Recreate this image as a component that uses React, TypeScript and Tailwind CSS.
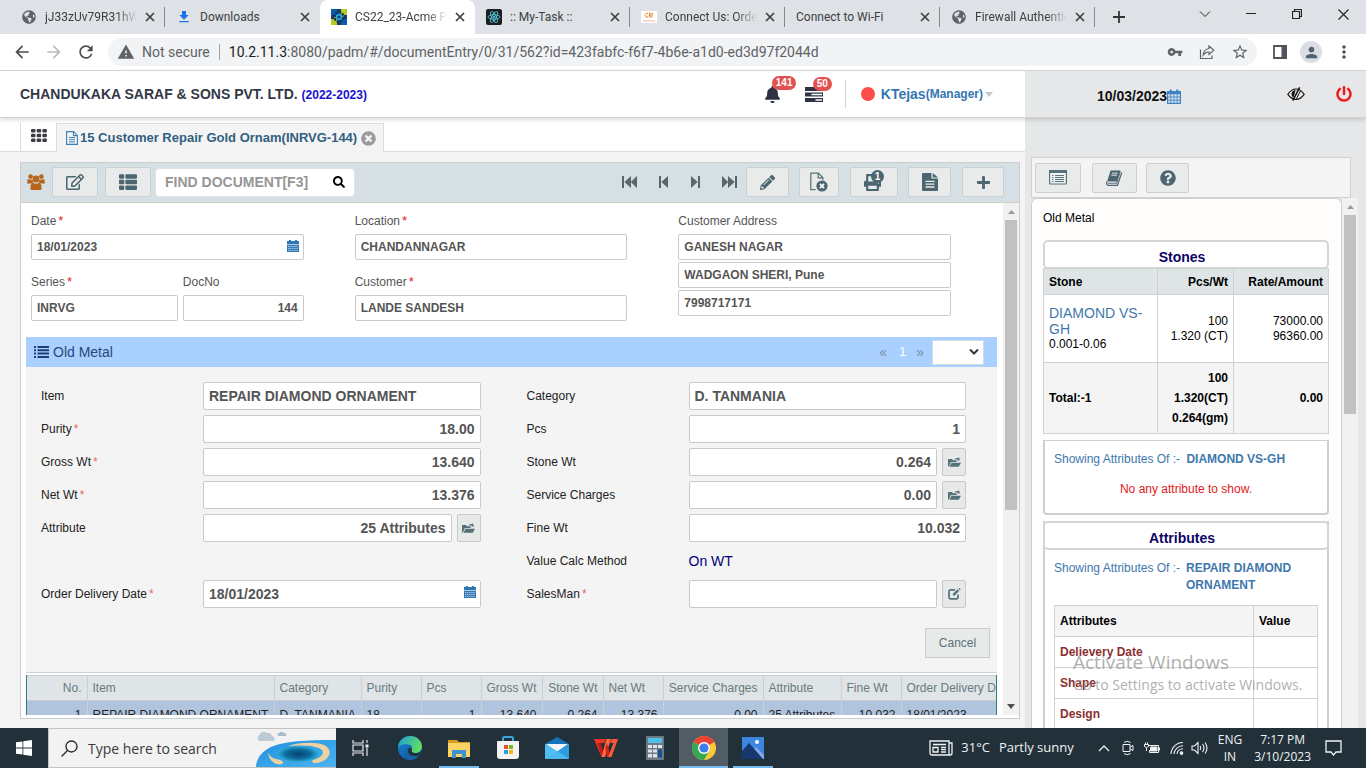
import React from "react";
import {
  FaBell, FaFileAlt, FaGlobeAmericas, FaPlus, FaPowerOff,
  FaPrint, FaQuestionCircle, FaRegEdit, FaSearch,
  FaThList, FaTimesCircle, FaPencilAlt,
} from "react-icons/fa";
import {
  MdArrowBack, MdArrowForward, MdFileDownload, MdMoreVert, MdPerson, MdRefresh, MdStarBorder,
  MdVpnKey, MdWarning,
} from "react-icons/md";

const SANS = "font-['Liberation_Sans',Arial,sans-serif]";
const UI = "font-['Open_Sans','Noto_Sans',sans-serif]";
const BROWSER = "font-[Roboto,'Noto_Sans',sans-serif]";

/* ---------- small drawings ---------- */

const CloseX = ({ size = 10 }: { size?: number }) => (
  <svg width={size} height={size} viewBox="0 0 10 10" stroke="currentColor" strokeWidth="1.7" fill="none" aria-hidden="true">
    <path d="M1 1l8 8M9 1l-8 8" />
  </svg>
);

const AcmeLogo = () => (
  <svg width="16" height="16" viewBox="0 0 16 16" aria-hidden="true">
    <path d="M0 0h8v8H0zM8 8h8v8H8z" fill="#0b5cab" />
    <path d="M8 0h8v8H8zM0 8h8v8H0z" fill="#b5cc1f" />
    <path d="M0 6h3v4H0zM13 6h3v4h-3zM6 0h4v3H6zM6 13h4v3H6z" fill="#153a6b" />
    <circle cx="8" cy="8" r="4.4" fill="none" stroke="#12305c" strokeWidth="2.6" strokeDasharray="2.4 .9" />
    <circle cx="8" cy="8" r="3.2" fill="#2aa7e0" />
    <circle cx="8" cy="8" r="1.5" fill="#0b3a6e" />
  </svg>
);

const ReactLogo = () => (
  <svg width="16" height="16" viewBox="0 0 16 16" fill="none" stroke="#5cc3d9" strokeWidth=".9" aria-hidden="true">
    <rect width="16" height="16" rx="2" fill="#1b1f24" stroke="none" />
    <ellipse cx="8" cy="8" rx="6" ry="2.3" />
    <ellipse cx="8" cy="8" rx="6" ry="2.3" transform="rotate(60 8 8)" />
    <ellipse cx="8" cy="8" rx="6" ry="2.3" transform="rotate(120 8 8)" />
    <circle cx="8" cy="8" r="1" fill="#5cc3d9" />
  </svg>
);

const ConnectLogo = () => (
  <svg width="16" height="12" viewBox="0 0 16 12" fill="none" aria-hidden="true">
    <rect width="16" height="12" fill="#fff" />
    <path d="M7 2.5a2 2 0 1 0 0 3.6V4.4M8.5 1.5V5a1.4 1.4 0 0 0 2.8 0V1.5M9.8 2v3" stroke="#ee8a3c" strokeWidth="1" />
    <path d="M2 9.8h12" stroke="#f3a9a0" strokeWidth="1.2" strokeDasharray="1.5 .6" />
  </svg>
);

const GlyphCalendar = () => (
  <svg width="12" height="12" viewBox="0 0 12 12" fill="#2f76b5" aria-hidden="true">
    <path d="M2 0h2v1h4V0h2v1h2v3H0V1h2z" />
    <path d="M0 4.600h12V12H0z" />
    <path d="M1 6.400h10M1 8.400h10M1 10.400h10" stroke="#dcebf7" strokeWidth=".8" strokeDasharray="1.4 .7" />
  </svg>
);

const GridCalendar = () => (
  <svg width="14" height="15" viewBox="0 0 14 15" fill="none" stroke="#3a83c4" aria-hidden="true">
    <path d="M.6 2.600h12.800v11.800H.6z" strokeWidth="1.200" />
    <path d="M.6 2.600h12.800v2.200H.6z" fill="#3a83c4" />
    <path d="M3.800 .4v3M10.200 .4v3" strokeWidth="2" />
    <path d="M3.800 5v9M7 5v9M10.200 5v9M1 8h12M1 11.200h12" strokeWidth=".9" />
  </svg>
);

const TasksIcon = () => (
  <svg width="18" height="15" viewBox="0 0 18 15" aria-hidden="true">
    <path d="M0 0h18v4H0zM0 5.500h18v4H0zM0 11h18v4H0z" fill="#2f3242" />
    <path d="M6.500 6.700H17v1.600H6.500zM10.500 12.200H17v1.600h-6.500zM12 1.200h5v1.600h-5z" fill="#fff" />
  </svg>
);

const AppsGrid = () => (
  <svg width="16" height="13" viewBox="0 0 16 13" fill="#3c3c46" aria-hidden="true">
    <rect width="4.500" height="3.600" rx="1" /><rect x="5.700" width="4.500" height="3.600" rx="1" /><rect x="11.400" width="4.500" height="3.600" rx="1" />
    <rect y="4.700" width="4.500" height="3.600" rx="1" /><rect x="5.700" y="4.700" width="4.500" height="3.600" rx="1" /><rect x="11.400" y="4.700" width="4.500" height="3.600" rx="1" />
    <rect y="9.400" width="4.500" height="3.600" rx="1" /><rect x="5.700" y="9.400" width="4.500" height="3.600" rx="1" /><rect x="11.400" y="9.400" width="4.500" height="3.600" rx="1" />
  </svg>
);

const DocIcon = () => (
  <svg width="12" height="14" viewBox="0 0 12 14" fill="none" stroke="#3a83b8" aria-hidden="true">
    <path d="M.6 .6h7l3.800 3.800v9H.6zM7.400 .8v3.800h3.800" strokeWidth="1.100" />
    <path d="M3 6.500h6M3 8.700h6M3 10.900h6" strokeWidth="1" />
  </svg>
);

const UsersIcon = () => (
  <svg width="18" height="16" viewBox="0 0 18 16" fill="#b5651d" aria-hidden="true">
    <circle cx="3.600" cy="2.600" r="2.300" /><circle cx="14.400" cy="2.600" r="2.300" />
    <circle cx="9" cy="5" r="3.400" />
    <path d="M.2 9.200V7.400q0-2 1.200-2.400 2 1 4 .4.400 1.800 1.400 2.800-1.800.2-2.600 1.400H1.400Q.2 9.600.2 9.200zM17.800 9.200V7.400q0-2-1.200-2.400-2 1-4 .4-.4 1.800-1.400 2.800 1.800.2 2.600 1.400h2.800q1.200 0 1.200-.4z" />
    <path d="M3.400 14.400q0-5.600 2.600-5.600Q9 10.800 12 8.800q2.600 0 2.600 5.600 0 1.600-1.600 1.600H5q-1.600 0-1.600-1.600z" />
  </svg>
);

const ListLines = () => (
  <svg width="15" height="12" viewBox="0 0 15 12" fill="#1f3b78" aria-hidden="true">
    <path d="M0 0h2v2H0zM3.500 0H15v2H3.500zM0 3.300h2v2H0zM3.500 3.300H15v2H3.500zM0 6.600h2v2H0zM3.500 6.600H15v2H3.500zM0 9.900h2v2H0zM3.500 9.900H15v2H3.500z" />
  </svg>
);

const FolderOpen = () => (
  <svg width="13" height="11" viewBox="0 0 13 11" fill="#55717a" aria-hidden="true">
    <path d="M0 2h4l1 1.200h3.600V5H2.800L1 9.400H0z" />
    <path d="M3.400 5.800H13l-2.200 4H1.600z" />
    <path d="M6.600 2.400c1-1.500 2.400-1.800 3.600-1.100L11 0l.9 3.400-3.300-.2.900-1c-.7-.3-1.400-.2-2 .5z" />
  </svg>
);

const EditSquare = () => (
  <svg width="13" height="12" viewBox="0 0 13 12" fill="none" stroke="#55717a" aria-hidden="true">
    <path d="M7 1.800H2.600A1.600 1.600 0 0 0 1 3.400v5.800a1.600 1.600 0 0 0 1.600 1.600h5.800A1.600 1.600 0 0 0 10 9.200V6.400" strokeWidth="1.700" />
    <path d="M5.300 7.200l5-5" strokeWidth="2.400" />
    <path d="M11.200 1.500l.8-.8" strokeWidth="1.800" />
  </svg>
);

const SkipFirst = () => (
  <svg width="15" height="12" viewBox="0 0 15 12" fill="#5c6669" aria-hidden="true">
    <path d="M0 0h2v12H0zM9 0v12L2.400 6zM15 0v12L8.800 6z" />
  </svg>
);
const SkipPrev = () => (
  <svg width="9" height="12" viewBox="0 0 9 12" fill="#5c6669" aria-hidden="true">
    <path d="M0 0h2v12H0zM9 0v12L2.400 6z" />
  </svg>
);

const FileRemove = () => (
  <svg width="20" height="20" viewBox="0 0 20 20" fill="none" aria-hidden="true">
    <path d="M6.500 17.600H1.800V1.200h7.600l4.400 4.400v2.600M9.200 1.400v4.400h4.400" stroke="#55717a" strokeWidth="1.200" />
    <circle cx="13" cy="14" r="5.600" fill="#4b6670" />
    <path d="M10.900 11.900l4.200 4.200M15.100 11.900l-4.200 4.200" stroke="#fff" strokeWidth="1.600" />
  </svg>
);

const FileSolid = () => (
  <svg width="16" height="18" viewBox="0 0 16 18" fill="#4b6670" aria-hidden="true">
    <path d="M0 1q0-1 1-1h8.500v5.500H16V17q0 1-1 1H1q-1 0-1-1zM10.800 0L16 4.400h-5.200z" />
    <path d="M3.500 8.400h9M3.500 11.200h9M3.500 14h9" stroke="#e9eaea" strokeWidth="1.300" />
  </svg>
);

const EyeSlash = () => (
  <svg width="18" height="14" viewBox="0 0 18 14" fill="none" stroke="#111" aria-hidden="true">
    <path d="M.8 7.400C3.400 3.400 6.200 2 9 2s5.600 1.400 8.200 5.400C14.600 11 12 12.400 9 12.400S3.400 11 .8 7.400z" strokeWidth="1.100" />
    <path d="M8.600 3c-3 .2-4 2.200-4 4.200 0 1.600.8 2.800 1.800 3.600z" fill="#111" stroke="none" />
    <path d="M12.600 .4L5.800 13.600" strokeWidth="1.500" />
    <path d="M13.800 3.200L9.400 11.800" strokeWidth="1" />
  </svg>
);

const ShareIcon = () => (
  <svg width="16" height="16" viewBox="0 0 16 16" fill="none" stroke="#5f6368" strokeWidth="1.200" aria-hidden="true">
    <path d="M1.500 5.500v9h11.500v-3" />
    <path d="M10 2l4.800 4.200L10 10.400V8C7.400 8 5.600 9 4.200 11c.3-3.400 2.200-6 5.800-6.500z" />
  </svg>
);

const ListAlt = () => (
  <svg width="18" height="15" viewBox="0 0 18 15" aria-hidden="true">
    <rect x=".6" y=".6" width="16.800" height="13.400" rx="1" fill="#f2f4f4" stroke="#55717a" strokeWidth="1.200" />
    <path d="M0 0h18v3H0z" fill="#55717a" />
    <path d="M3 5.500h1.500M6 5.500h9M3 7.500h1.500M6 7.500h9M3 9.500h1.500M6 9.500h9M3 11.500h1.500M6 11.500h9" stroke="#55717a" strokeWidth="1" />
  </svg>
);

const BookIcon = () => (
  <svg width="17" height="16" viewBox="0 0 17 16" aria-hidden="true">
    <path d="M4.600 .4h9.800L11 11.400H1.200z" fill="#4b6670" />
    <path d="M1.200 11.400c-1 1.400-.6 3.600 1 3.900h9.200L15.800 2.600" fill="none" stroke="#4b6670" strokeWidth="1.200" />
    <path d="M1.800 13.300h8.800L14.400 1.500" fill="none" stroke="#4b6670" strokeWidth=".9" />
    <path d="M6 3.200h5.600M5.400 5.200H11" stroke="#dfe6e8" strokeWidth="1" />
  </svg>
);

const Beach = () => (
  <svg width="80" height="38" viewBox="0 0 80 38" aria-hidden="true">
    <defs>
      <linearGradient id="sea" x1="0" y1="0" x2="1" y2="1">
        <stop offset="0" stopColor="#1f8fdd" />
        <stop offset="1" stopColor="#4db4f3" />
      </linearGradient>
      <radialGradient id="hole">
        <stop offset="0" stopColor="#07456e" />
        <stop offset=".6" stopColor="#0d6c9f" />
        <stop offset="1" stopColor="#2fb0d8" />
      </radialGradient>
    </defs>
    <path d="M3 12a4 4 0 0 1 0-6 5 5 0 0 1 8-2 4 4 0 0 1 5 3 3 3 0 0 1 2 5z" fill="#bccbd8" />
    <path d="M22 7a2 2 0 0 1 1-3 3 3 0 0 1 5 0 2 2 0 0 1 2 3z" fill="#a9bdcd" />
    <path d="M0 38c0-8 6-16 15-20C28 12 50 11 80 11v27z" fill="url(#sea)" />
    <path d="M12 22c0 4 4 7 8 8 6 1 9 3 6 5-7 2-14-4-14-13z" fill="#ecd2a2" />
    <path d="M32 17c12-4 28-4 36-1 10 5 6 15-6 18-7 1-8-3-2-4 8-3 9-8 3-11-8-3-20-3-31-2z" fill="#ecd2a2" />
    <ellipse cx="42" cy="25" rx="21" ry="8" fill="url(#hole)" />
  </svg>
);

/* ---------- browser frame ---------- */

type Tab = { title: string; icon?: React.ReactNode; active?: boolean; line?: boolean; fade?: boolean };

const globe = <FaGlobeAmericas size={14} className="text-[#5f6368]" />;

const tabs: Tab[] = [
  { title: "jJ33zUv79R31hWc", icon: globe, line: true, fade: true },
  { title: "Downloads", icon: <MdFileDownload size={18} className="text-[#1a73e8]" /> },
  { title: "CS22_23-Acme Pad", icon: <AcmeLogo />, active: true, fade: true },
  { title: ":: My-Task ::", icon: <ReactLogo />, line: true },
  { title: "Connect Us: Order", icon: <ConnectLogo />, line: true, fade: true },
  { title: "Connect to Wi-Fi", line: true },
  { title: "Firewall Authentica", icon: globe, line: true, fade: true },
];

function TabStrip() {
  return (
    <div className="flex h-[34px] shrink-0 items-stretch bg-[#dee1e6] pl-[10px] text-[12px] text-[#3c4043]">
      {tabs.map((t) => (
        <div
          key={t.title}
          className={`flex w-[155px] items-center pl-[11px] ${t.active ? "rounded-t-lg bg-white" : ""}`}
        >
          {t.icon && <span className="mr-2 flex w-4 shrink-0 justify-center">{t.icon}</span>}
          <span
            className={`min-w-0 flex-1 overflow-hidden whitespace-nowrap ${t.fade ? "[mask-image:linear-gradient(to_right,black_78%,transparent)]" : ""}`}
          >
            {t.title}
          </span>
          <button type="button" aria-label={`Close ${t.title}`} className="ml-2"><CloseX /></button>
          <span className={`ml-[9px] h-5 w-px ${t.line ? "bg-[#85898e]" : "bg-transparent"}`} />
        </div>
      ))}
      <button type="button" aria-label="New tab" className="ml-[18px] flex items-center">
        <svg width="12" height="12" viewBox="0 0 12 12" stroke="#333" strokeWidth="1.800" aria-hidden="true"><path d="M6 0v12M0 6h12" /></svg>
      </button>
      <div className="ml-auto flex h-7 items-center text-[#222]">
        <button type="button" aria-label="Search tabs" className="flex w-[46px] justify-center">
          <svg width="12" height="7" viewBox="0 0 12 7" fill="none" stroke="currentColor" aria-hidden="true"><path d="M1 .5l5 5 5-5" /></svg>
        </button>
        <button type="button" aria-label="Minimize" className="flex w-[46px] justify-center">
          <svg width="10" height="2" viewBox="0 0 10 2" fill="currentColor" aria-hidden="true"><path d="M0 0h10v1H0z" /></svg>
        </button>
        <button type="button" aria-label="Restore" className="flex w-[46px] justify-center">
          <svg width="10" height="10" viewBox="0 0 10 10" fill="none" stroke="currentColor" strokeWidth="1.200" aria-hidden="true"><path d="M.5 2.500h7v7h-7zM2.500 2.500v-2h7v7h-2" /></svg>
        </button>
        <button type="button" aria-label="Close window" className="flex w-[46px] justify-center">
          <svg width="11" height="11" viewBox="0 0 11 11" stroke="currentColor" strokeWidth="1.100" aria-hidden="true"><path d="M.5 .5l10 10M10.500 .5l-10 10" /></svg>
        </button>
      </div>
    </div>
  );
}

function AddressBar() {
  return (
    <div className="flex h-[37px] shrink-0 items-center border-b border-[#d5d7da] bg-white pr-3 pl-3 text-[#5f6368]">
      <button type="button" aria-label="Back"><MdArrowBack size={20} className="text-[#4a4d51]" /></button>
      <button type="button" aria-label="Forward" className="ml-3"><MdArrowForward size={20} className="text-[#b9bbbe]" /></button>
      <button type="button" aria-label="Reload" className="ml-3"><MdRefresh size={20} className="text-[#4a4d51]" /></button>
      <div className="ml-3 flex h-7 min-w-0 flex-1 items-center rounded-full bg-[#f1f3f4] pr-2 pl-[9px]">
        <MdWarning size={18} className="shrink-0" />
        <span className="ml-[7px] shrink-0 text-[14px]">Not secure</span>
        <span className="mx-[9px] h-4 w-px shrink-0 bg-[#9aa0a6]" />
        <span className="min-w-0 flex-1 overflow-hidden text-[14px] whitespace-nowrap">
          <span className="text-[#202124]">10.2.11.3</span>:8080/padm/#/documentEntry/0/31/562?id=423fabfc-f6f7-4b6e-a1d0-ed3d97f2044d
        </span>
        <button type="button" aria-label="Passwords"><MdVpnKey size={16} /></button>
        <button type="button" aria-label="Share" className="ml-4"><ShareIcon /></button>
        <button type="button" aria-label="Bookmark" className="ml-4"><MdStarBorder size={18} /></button>
      </div>
      <button type="button" aria-label="Side panel" className="ml-4">
        <svg width="14" height="14" viewBox="0 0 14 14" aria-hidden="true">
          <path d="M1 1h12v12H1z" fill="none" stroke="#50545a" strokeWidth="1.800" />
          <path d="M8.500 0H14v14H8.500z" fill="#50545a" />
        </svg>
      </button>
      <button type="button" aria-label="Profile" className="ml-[13px] flex size-[22px] items-center justify-center rounded-full bg-[#dadde2]">
        <MdPerson size={17} className="text-[#52616f]" />
      </button>
      <button type="button" aria-label="Menu" className="ml-3"><MdMoreVert size={20} className="text-[#4a4d51]" /></button>
    </div>
  );
}

/* ---------- application header ---------- */

const BADGE = "absolute -top-[10px] left-2 rounded-full bg-[#e4504f] px-[4px] text-[10px] leading-[14px] font-bold text-white";

function AppHeader() {
  return (
    <header className="relative z-10 flex h-[47px] shrink-0 border-b border-[#d2d2d2] shadow-[0_2px_4px_rgba(0,0,0,0.14)]">
      <div className="flex min-w-0 flex-1 items-center bg-white pr-8 pl-5">
        <h1 className="text-[14px] font-bold whitespace-nowrap text-[#333848]">
          CHANDUKAKA SARAF &amp; SONS PVT. LTD. <span className="text-[12px] text-[#1a11cf]">(2022-2023)</span>
        </h1>
        <div className="ml-auto flex items-center">
          <button type="button" aria-label="Notifications" className="relative text-[#2f3242]">
            <FaBell size={17} />
            <span className={BADGE}>141</span>
          </button>
          <button type="button" aria-label="Tasks" className="relative ml-6">
            <TasksIcon />
            <span className={BADGE}>50</span>
          </button>
          <span className="ml-[22px] h-7 w-px bg-[#d2d2d2]" />
          <span className="ml-[15px] size-[14px] rounded-full bg-[#ff4c4c]" />
          <a href="#profile" className="ml-[6px] flex items-center text-[12px] font-bold whitespace-nowrap text-[#3276b1]">
            <span className="text-[14px]">KTejas</span>(Manager)
            <svg width="8" height="5" viewBox="0 0 8 5" fill="#c4c8cb" className="ml-[2px]" aria-hidden="true"><path d="M0 0h8L4 5z" /></svg>
          </a>
        </div>
      </div>
      <div className="flex w-[341px] shrink-0 items-center bg-[#e5e7e9] pr-[14px] pl-[72px]">
        <span className="pt-1 text-[14px] font-bold text-[#111]">10/03/2023</span>
        <span className="pt-1"><GridCalendar /></span>
        <button type="button" aria-label="Hide" className="ml-auto"><EyeSlash /></button>
        <button type="button" aria-label="Log out" className="ml-[31px]"><FaPowerOff size={16} className="text-[#ee1c1c]" /></button>
      </div>
    </header>
  );
}

/* ---------- document form ---------- */

const TOOL = "flex h-[30px] items-center justify-center rounded-[2px] border border-[#cbd0d2] bg-[#e9eaea] text-[#4b6670]";

function Toolbar() {
  return (
    <div className="flex h-10 shrink-0 items-center border-b border-[#d3d3bd] bg-[#d6e0e4] pr-[15px] pb-px pl-[6px]">
      <UsersIcon />
      <button type="button" aria-label="Edit document" className={`ml-[7px] w-[46px] ${TOOL}`}><FaRegEdit size={18} /></button>
      <button type="button" aria-label="Document list" className={`ml-[7px] w-[46px] ${TOOL}`}><FaThList size={18} /></button>
      <div className="ml-1 flex h-[29px] w-[200px] items-center rounded-[4px] border border-[#dfe5e7] bg-white pr-[9px] pl-[9px]">
        <input
          aria-label="Find document"
          placeholder="FIND DOCUMENT[F3]"
          className="min-w-0 flex-1 text-[14px] font-bold outline-none placeholder:text-[#969696]"
        />
        <button type="button" aria-label="Search"><FaSearch size={12} className="text-black" /></button>
      </div>
      <div className="ml-auto flex items-center">
        <button type="button" aria-label="First"><SkipFirst /></button>
        <button type="button" aria-label="Previous" className="ml-[22px]"><SkipPrev /></button>
        <button type="button" aria-label="Next" className="ml-[23px] rotate-180"><SkipPrev /></button>
        <button type="button" aria-label="Last" className="ml-[22px] rotate-180"><SkipFirst /></button>
        <button type="button" aria-label="Edit" className={`ml-[9px] w-[43px] ${TOOL}`}><FaPencilAlt size={15} /></button>
        <button type="button" aria-label="Cancel document" className={`ml-[10px] w-10 ${TOOL}`}><FileRemove /></button>
        <button type="button" aria-label="Print" className={`relative ml-[11px] w-12 ${TOOL}`}>
          <FaPrint size={17} className="mr-1" />
          <span className="absolute top-[2px] left-[20px] flex size-[13px] items-center justify-center rounded-full bg-[#4b6670] text-[10px] leading-none font-bold text-white">1</span>
        </button>
        <button type="button" aria-label="Report" className={`ml-[10px] w-[43px] ${TOOL}`}><FileSolid /></button>
        <button type="button" aria-label="Add" className={`ml-[11px] w-[42px] ${TOOL}`}><FaPlus size={15} /></button>
      </div>
    </div>
  );
}

const BOX = "min-w-0 rounded-[2px] border border-[#c9c9c9] bg-white font-bold text-[#555] outline-none";

type FieldProps = { id: string; label: string; value: string; required?: boolean; right?: boolean; className?: string; icon?: boolean };

function Field({ id, label, value, required, right, className = "", icon }: FieldProps) {
  return (
    <div className={`flex min-w-0 flex-col ${className}`}>
      <label htmlFor={id} className="h-5 text-[12px] leading-5 text-[#555]">
        {label}
        {required && <span className="pl-[2px] text-[13px] text-[#e02020]">*</span>}
      </label>
      <div className="relative mt-[3px] flex">
        <input id={id} defaultValue={value} className={`h-[26px] w-full px-[5px] text-[12px] ${BOX} ${right ? "text-right" : ""}`} />
        {icon && <span className="absolute top-[6px] right-[5px]"><GlyphCalendar /></span>}
      </div>
    </div>
  );
}

function DocumentFields() {
  return (
    <div className="grid grid-cols-3 pt-2 pb-4 [&>div]:pr-[46px] [&>div]:pl-[5px]">
      <div className="flex flex-col gap-3">
        <Field id="date" label="Date" value="18/01/2023" required icon />
        <div className="flex gap-[5px]">
          <Field id="series" label="Series" value="INRVG" required className="flex-[147]" />
          <Field id="docno" label="DocNo" value="144" right className="flex-[121]" />
        </div>
      </div>
      <div className="flex flex-col gap-3">
        <Field id="location" label="Location" value="CHANDANNAGAR" required />
        <Field id="customer" label="Customer" value="LANDE SANDESH" required />
      </div>
      <div className="flex flex-col gap-[2px]">
        <Field id="address1" label="Customer Address" value="GANESH NAGAR" />
        <input aria-label="Address line 2" defaultValue="WADGAON SHERI, Pune" className={`h-[26px] px-[5px] text-[12px] ${BOX}`} />
        <input aria-label="Address line 3" defaultValue="7998717171" className={`h-[26px] px-[5px] text-[12px] ${BOX}`} />
      </div>
    </div>
  );
}

type RowProps = { id: string; label: string; value?: string; required?: boolean; left?: boolean; action?: React.ReactNode; icon?: boolean };

function Row({ id, label, value = "", required, left, action, icon }: RowProps) {
  return (
    <div className="flex h-7 items-center">
      <label htmlFor={id} className="w-[162px] shrink-0 text-[12px] text-[#222]">
        {label}
        {required && <span className="pl-[2px] text-[#e8686a]">*</span>}
      </label>
      <div className="relative flex min-w-0 flex-1 gap-[5px]">
        <input id={id} defaultValue={value} className={`h-7 flex-1 px-[5px] text-[14px] ${BOX} ${left ? "" : "text-right"}`} />
        {icon && <span className="absolute top-[6px] right-[5px]"><GlyphCalendar /></span>}
        {action && (
          <button type="button" aria-label={`Open ${label}`} className="flex h-7 w-6 shrink-0 items-center justify-center rounded-[2px] border border-[#c9c9c9] bg-[#e7e8e8]">
            {action}
          </button>
        )}
      </div>
    </div>
  );
}

function OldMetal() {
  return (
    <section>
      <div className="flex h-[30px] items-center bg-[#a9d0ff] pr-[13px] pl-2 text-[#28497c]">
        <ListLines />
        <h2 className="ml-1 text-[14px]">Old Metal</h2>
        <nav aria-label="Pages" className="ml-auto flex items-center text-[14px] text-[#7a8ba3]">
          <a href="#prev">«</a>
          <a href="#page1" className="ml-3 text-[13px] text-white">1</a>
          <a href="#next" className="ml-[10px]">»</a>
        </nav>
        <div className="relative ml-2 flex items-center text-[#333]">
          <select aria-label="Page" defaultValue="" className="h-[25px] w-[52px] appearance-none border border-[#d3dbe4] bg-white">
            <option value=""></option>
            <option value="1">1</option>
          </select>
          <svg width="10" height="6" viewBox="0 0 10 6" fill="none" stroke="currentColor" strokeWidth="2" className="pointer-events-none absolute right-[5px]" aria-hidden="true"><path d="M1 .5l4 4 4-4" /></svg>
        </div>
      </div>
      <div className="border-b border-[#cfd3d5] bg-[#f4f4f4] pt-[15px]">
        <div className="grid grid-cols-2 [&>div]:pr-[31px] [&>div]:pl-[15px]">
          <div className="flex flex-col gap-[5px]">
            <Row id="item" label="Item" value="REPAIR DIAMOND ORNAMENT" left />
            <Row id="purity" label="Purity" value="18.00" required />
            <Row id="gross" label="Gross Wt" value="13.640" required />
            <Row id="net" label="Net Wt" value="13.376" required />
            <Row id="attribute" label="Attribute" value="25 Attributes" action={<FolderOpen />} />
            <div className="h-7" />
            <Row id="delivery" label="Order Delivery Date" value="18/01/2023" required left icon />
          </div>
          <div className="flex flex-col gap-[5px]">
            <Row id="category" label="Category" value="D. TANMANIA" left />
            <Row id="pcs" label="Pcs" value="1" />
            <Row id="stone" label="Stone Wt" value="0.264" action={<FolderOpen />} />
            <Row id="charges" label="Service Charges" value="0.00" action={<FolderOpen />} />
            <Row id="fine" label="Fine Wt" value="10.032" />
            <div className="flex h-7 items-center">
              <span className="w-[162px] shrink-0 text-[12px] text-[#222]">Value Calc Method</span>
              <span className="text-[14px] text-[#00007a]">On WT</span>
            </div>
            <Row id="salesman" label="SalesMan" required left action={<EditSquare />} />
          </div>
        </div>
        <div className="flex justify-end pt-5 pr-[7px] pb-[14px]">
          <button type="button" className="h-[30px] w-[65px] border border-[#c9cccd] bg-[#e8e9e9] text-[12px] text-[#5b7078]">Cancel</button>
        </div>
      </div>
    </section>
  );
}

const columns: { name: string; value: string; width: string; right?: boolean; headRight?: boolean }[] = [
  { name: "No.", value: "1", width: "w-[60px]", right: true, headRight: true },
  { name: "Item", value: "REPAIR DIAMOND ORNAMENT", width: "w-[187px]" },
  { name: "Category", value: "D. TANMANIA", width: "w-[87px]" },
  { name: "Purity", value: "18", width: "w-[60px]" },
  { name: "Pcs", value: "1", width: "w-[60px]", right: true },
  { name: "Gross Wt", value: "13.640", width: "w-[61px]", right: true, headRight: true },
  { name: "Stone Wt", value: "0.264", width: "w-[61px]", right: true, headRight: true },
  { name: "Net Wt", value: "13.376", width: "w-[60px]", right: true },
  { name: "Service Charges", value: "0.00", width: "w-[100px]", right: true, headRight: true },
  { name: "Attribute", value: "25 Attributes", width: "w-[78px]" },
  { name: "Fine Wt", value: "10.032", width: "w-[60px]", right: true },
  { name: "Order Delivery Date", value: "18/01/2023", width: "w-[140px]" },
];

function ItemsTable() {
  return (
    <div className="mt-[2px] overflow-hidden border-x border-[#2f7f80]">
      <table className="w-[1014px] table-fixed border-collapse text-[12px] whitespace-nowrap">
        <thead>
          <tr className="h-[25px] bg-[#dfe4e6] text-[#6a7a80]">
            {columns.map((c) => (
              <th key={c.name} className={`border border-l-0 border-[#c9cfd2] px-[5px] font-normal ${c.width} ${c.headRight ? "text-right" : "text-left"}`}>{c.name}</th>
            ))}
          </tr>
        </thead>
        <tbody>
          <tr className="h-[28px] bg-[#b0c4de] text-[#222]">
            {columns.map((c) => (
              <td key={c.name} className={`border-r border-[#c9cfd2] px-[5px] ${c.right ? "text-right" : "text-left"}`}>{c.value}</td>
            ))}
          </tr>
        </tbody>
      </table>
    </div>
  );
}

function ScrollBar({ thumb, down }: { thumb: string; down?: boolean }) {
  return (
    <div className="flex w-4 shrink-0 flex-col items-center bg-[#f1f1f1]" aria-hidden="true">
      <svg width="7" height="4" viewBox="0 0 7 4" fill="#9b9b9b" className="mt-[7px] mb-[6px] shrink-0"><path d="M3.500 0L7 4H0z" /></svg>
      <div className={`w-3 bg-[#c1c1c1] ${thumb}`} />
      {down && <svg width="8" height="5" viewBox="0 0 8 5" fill="#505050" className="mt-auto mb-[6px] shrink-0"><path d="M0 0h8L4 5z" /></svg>}
    </div>
  );
}

function MainPanel() {
  return (
    <main className="flex min-w-0 flex-1 flex-col bg-[#f4f4f4]">
      <div className="flex h-[34px] shrink-0 items-end border-b border-[#dcdcdc] bg-white pl-5">
        <a href="#apps" aria-label="Apps" className="flex h-7 w-9 items-center justify-center border-l border-[#dcdcdc] pb-1">
          <AppsGrid />
        </a>
        <div className="-mb-px flex h-[29px] items-center border border-b-0 border-[#dcdcdc] bg-[#f4f4f4] pr-[7px] pl-[9px]">
          <DocIcon />
          <a href="#document" className="ml-[2px] text-[13px] font-bold text-[#316080]">15 Customer Repair Gold Ornam(INRVG-144)</a>
          <button type="button" aria-label="Close document" className="ml-1"><FaTimesCircle size={15} className="text-[#9b9b9b]" /></button>
        </div>
      </div>
      <div className="mt-[10px] mr-[5px] mb-[9px] ml-5 flex min-h-0 flex-1 flex-col border border-[#c6ced2] bg-white">
        <Toolbar />
        <div className="mb-[3px] flex min-h-0 flex-1 pl-[5px]">
          <div className="min-w-0 flex-1 overflow-hidden pr-[6px]">
            <DocumentFields />
            <OldMetal />
            <ItemsTable />
          </div>
          <ScrollBar thumb="h-[290px]" down />
        </div>
      </div>
    </main>
  );
}

/* ---------- side panel ---------- */

const CELL = "border border-[#cfd1d2] px-[5px]";

function SidePanel() {
  return (
    <aside className="flex w-[341px] shrink-0 flex-col bg-[#e5e7e9] pt-[39px] pr-2 pl-[6px] text-[12px] text-black">
      <div className="mr-[7px] flex h-[41px] shrink-0 items-center border border-[#cfd1d3] bg-[#f4f4f4] pl-[3px]">
        <button type="button" aria-label="Details" className={`w-[46px] ${TOOL}`}><ListAlt /></button>
        <button type="button" aria-label="Catalogue" className={`ml-[11px] w-[45px] ${TOOL}`}><BookIcon /></button>
        <button type="button" aria-label="Help" className={`ml-[9px] w-[43px] ${TOOL}`}><FaQuestionCircle size={16} /></button>
      </div>
      <div className="flex min-h-0 flex-1">
        <div className="min-w-0 flex-1 overflow-hidden rounded-t-[6px] border border-b-0 border-[#cfcfcf] bg-[#fefdfc] pr-3 pl-[11px]">
          <p className="pt-[10px] leading-[18px]">Old Metal</p>
          <section className="mt-[13px]">
            <h2 className="flex h-[29px] items-end justify-center rounded-[5px] border-2 border-[#d6d6d6] bg-white pr-2 text-[14px] leading-5 font-bold text-[#0c0566]">Stones</h2>
            <table className="-mt-px w-full table-fixed border-collapse bg-white">
              <thead>
                <tr className="h-[26px] bg-[#dfe4e6]">
                  <th className={`${CELL} w-[114px] text-left`}>Stone</th>
                  <th className={`${CELL} w-[76px] text-right`}>Pcs/Wt</th>
                  <th className={`${CELL} text-right`}>Rate/Amount</th>
                </tr>
              </thead>
              <tbody>
                <tr className="h-[68px]">
                  <td className={CELL}>
                    <a href="#stone" className="block text-[14px] leading-4 text-[#3f78ad]">DIAMOND VS-GH</a>
                    <span className="block leading-[15px]">0.001-0.06</span>
                  </td>
                  <td className={`${CELL} text-right leading-[15px]`}>100<br />1.320 (CT)</td>
                  <td className={`${CELL} text-right leading-[15px]`}>73000.00<br />96360.00</td>
                </tr>
                <tr className="h-[71px] bg-[#f4f4f4] font-bold">
                  <td className={CELL}>Total:-1</td>
                  <td className={`${CELL} text-right leading-5`}>100<br />1.320(CT)<br />0.264(gm)</td>
                  <td className={`${CELL} text-right`}>0.00</td>
                </tr>
              </tbody>
            </table>
            <div className="mt-[6px] h-[75px] rounded-b-[4px] border-2 border-t border-[#cfcfcf] bg-white px-[9px] pt-[9px]">
              <p className="leading-[18px] text-[#3f78ad]">Showing Attributes Of :- <b className="ml-[3px]">DIAMOND VS-GH</b></p>
              <p className="mt-3 text-center leading-[18px] text-[#e01a1a]">No any attribute to show.</p>
            </div>
          </section>
          <section className="mt-[6px] border-x-2 border-[#cfcfcf] bg-white">
            <h2 className="-mx-[2px] flex h-[29px] items-end justify-center rounded-[5px] border-2 border-[#d6d6d6] pr-2 text-[14px] leading-5 font-bold text-[#0c0566]">Attributes</h2>
            <div className="px-[9px] pt-[10px]">
              <p className="flex leading-[17px] text-[#3f78ad]">
                <span className="w-[132px] shrink-0 whitespace-nowrap">Showing Attributes Of :-</span>
                <b>REPAIR DIAMOND ORNAMENT</b>
              </p>
              <table className="mt-[11px] w-full table-fixed border-collapse text-left">
                <thead>
                  <tr className="h-[31px] bg-[#f4f4f4]">
                    <th className={CELL}>Attributes</th>
                    <th className={`${CELL} w-16`}>Value</th>
                  </tr>
                </thead>
                <tbody className="font-bold text-[#8b2f2f]">
                  {["Delievery Date", "Shape", "Design"].map((name) => (
                    <tr key={name} className="h-[31px]">
                      <td className={CELL}>{name}</td>
                      <td className={CELL}></td>
                    </tr>
                  ))}
                </tbody>
              </table>
            </div>
          </section>
        </div>
        <ScrollBar thumb="h-[199px]" />
      </div>
    </aside>
  );
}

/* ---------- taskbar ---------- */

const EdgeIcon = () => (
  <svg width="24" height="24" viewBox="0 0 24 24" aria-hidden="true">
    <defs>
      <linearGradient id="edgeTop" x1="0" y1="0" x2="1" y2=".4"><stop offset="0" stopColor="#1f9bde" /><stop offset="1" stopColor="#5fdb62" /></linearGradient>
      <linearGradient id="edgeLow" x1="0" y1="0" x2="1" y2="1"><stop offset="0" stopColor="#1b86d8" /><stop offset="1" stopColor="#0d4a90" /></linearGradient>
    </defs>
    <circle cx="12" cy="12" r="12" fill="url(#edgeLow)" />
    <path d="M0 11C1 4 6 0 12 0c7 0 12 5 12 10.500 0 4-3 6.500-6.500 6.500-3 0-4.500-1.200-4-2.500 1.500-2 .5-5.500-3.500-6C5 8 1.500 9 0 11z" fill="url(#edgeTop)" />
    <path d="M9.500 11c-2 4 0 9.500 6 9.500 3 0 5-1 6.500-2.500C20 21.500 16 24 12 24 7 23 5 15 9.500 11z" fill="#17629f" />
    <path d="M13.800 14c-.8 1.600 1 3.200 4.200 3.200 2 0 4-.8 5-2-.3 1.600-.8 2.600-1.500 3.600-4 2.600-11 1-11.500-3.600 0-2 .8-3.400 2-3.800 1 0 2 1.200 1.800 2.600z" fill="#22303a" />
  </svg>
);

const ExplorerIcon = () => (
  <svg width="22" height="19" viewBox="0 0 22 19" aria-hidden="true">
    <path d="M0 1h9l2 2h11v14H0z" fill="#d99a22" />
    <path d="M0 4h22v14H0z" fill="#fbd465" />
    <path d="M4 19v-8h14v8h-4v-4H8v4z" fill="#3f93d0" />
  </svg>
);

const StoreIcon = () => (
  <svg width="24" height="24" viewBox="0 0 24 24" aria-hidden="true">
    <path d="M7 6V2.500Q7 1 8.500 1h7Q17 1 17 2.500V6" fill="none" stroke="#3aa7d8" strokeWidth="2" />
    <path d="M1 5h22v15q0 3-3 3H4q-3 0-3-3z" fill="#f3f3f3" />
    <path d="M8 9h4v4H8z" fill="#e8512c" /><path d="M13 9h4v4h-4z" fill="#7eb91c" />
    <path d="M8 14h4v4H8z" fill="#21a1ec" /><path d="M13 14h4v4h-4z" fill="#fbb80c" />
  </svg>
);

const MailIcon = () => (
  <svg width="24" height="22" viewBox="0 0 24 22" aria-hidden="true">
    <path d="M0 7L12 0l12 7v14H0z" fill="#1573bd" />
    <path d="M1 7h22l-11 8z" fill="#f2f6fa" />
    <path d="M0 7l12 7.500L0 22z" fill="#3cb4ee" />
    <path d="M24 7v15H0z" fill="#2c9ce0" />
    <path d="M0 22V7l14 8 10 7z" fill="#55c3f5" opacity=".75" />
  </svg>
);

const WpsIcon = () => (
  <svg width="24" height="18" viewBox="0 0 24 18" aria-hidden="true">
    <path d="M0 0h12l-1.500 4H6.200L9 12.500 7.500 18z" fill="#f0341f" />
    <path d="M3.500 4h3L10 14l-2.500 4z" fill="#c51a12" />
    <path d="M12.500 0H17l-6 18H7.500z" fill="#ff6a45" />
    <path d="M13 4l2 7 1.500 7H13L11.200 9z" fill="#d42317" />
    <path d="M24 0l-6.500 18H14l5.500-14h-3.200L17.700 0z" fill="#ff5638" />
  </svg>
);

const CalculatorIcon = () => (
  <svg width="18" height="24" viewBox="0 0 18 24" aria-hidden="true">
    <rect width="18" height="24" rx="1" fill="#6d7a85" />
    <path d="M2 2h14v5H2z" fill="#4fc0e8" />
    <path d="M2 9h4v3H2zM7 9h4v3H7zM12 9h4v3h-4zM2 13.500h4v3H2zM7 13.500h4v3H7zM2 18h4v3.500H2zM7 18h4v3.500H7z" fill="#dfe4e8" />
    <path d="M12 13.500h4v8h-4z" fill="#17508f" />
  </svg>
);

const ChromeIcon = () => (
  <svg width="24" height="24" viewBox="0 0 24 24" aria-hidden="true">
    <circle cx="12" cy="12" r="12" fill="#fcc934" />
    <path d="M12 12L1.600 6A12 12 0 0 1 22.400 6z" fill="#ea4335" />
    <path d="M1.600 6A12 12 0 0 0 12 24l5.200-9z" fill="#34a853" />
    <path d="M12 6h10.400a12 12 0 0 0-10.400-6z" fill="#ea4335" />
    <circle cx="12" cy="12" r="6" fill="#fff" />
    <circle cx="12" cy="12" r="4.600" fill="#3b7de9" />
  </svg>
);

const PhotosIcon = () => (
  <svg width="22" height="22" viewBox="0 0 22 22" aria-hidden="true">
    <path d="M0 0h22v22H0z" fill="#3c86e0" />
    <path d="M9 16l5-6 8 8v4H9z" fill="#8aa6ea" />
    <path d="M0 14l7-8 14 16H0z" fill="#17386f" />
    <circle cx="15" cy="5" r="2" fill="#fff" />
  </svg>
);

const TaskView = () => (
  <svg width="17" height="16" viewBox="0 0 17 16" fill="none" stroke="#e6eaec" strokeWidth="1.200" aria-hidden="true">
    <path d="M1 0v3h10V0M1 16v-3h10v3M1 5h10v6H1zM15 0v3M15 8v8" /><path d="M13.500 4.500h3v3h-3z" fill="#e6eaec" stroke="none" />
  </svg>
);

const apps: { name: string; icon: React.ReactNode; state?: "open" | "active" }[] = [
  { name: "Task View", icon: <TaskView /> },
  { name: "Edge", icon: <EdgeIcon /> },
  { name: "File Explorer", icon: <ExplorerIcon />, state: "open" },
  { name: "Store", icon: <StoreIcon /> },
  { name: "Mail", icon: <MailIcon /> },
  { name: "WPS Office", icon: <WpsIcon /> },
  { name: "Calculator", icon: <CalculatorIcon /> },
  { name: "Chrome", icon: <ChromeIcon />, state: "active" },
  { name: "Photos", icon: <PhotosIcon />, state: "open" },
];

function Taskbar() {
  return (
    <footer className={`flex h-10 shrink-0 items-stretch bg-[#22303a] text-white ${UI}`}>
      <button type="button" aria-label="Start" className="flex w-12 items-center justify-center">
        <svg width="16" height="16" viewBox="0 0 16 16" fill="#fff" aria-hidden="true">
          <path d="M0 2.300L6.500 1.400v6.200H0zM7.300 1.300L16 0v7.600H7.300zM0 8.400h6.500v6.200L0 13.700zM7.300 8.400H16V16l-8.700-1.300z" />
        </svg>
      </button>
      <div className="flex w-[288px] items-center border border-r-0 border-[#c3c3c3] bg-[#f2f2f2] pl-3">
        <svg width="17" height="17" viewBox="0 0 17 17" fill="none" stroke="#222" strokeWidth="1.300" aria-hidden="true"><circle cx="10.500" cy="6.500" r="5.500" /><path d="M6.500 10.500L.5 16.500" /></svg>
        <input aria-label="Search" placeholder="Type here to search" className="ml-[10px] min-w-0 flex-1 text-[14px] outline-none placeholder:text-[#3a3a3a]" />
        <Beach />
      </div>
      {apps.map((a) => (
        <button
          key={a.name}
          type="button"
          aria-label={a.name}
          className={`flex w-[49px] flex-col items-center ${a.state === "active" ? "bg-[#525c64]" : ""}`}
        >
          <span className="flex flex-1 items-center">{a.icon}</span>
          {a.state && <span className={`-mt-[2px] h-[2px] bg-[#76b9ed] ${a.state === "active" ? "w-full" : "w-10"}`} />}
        </button>
      ))}
      <div className="ml-auto flex items-center pr-6 text-[#f0f3f4]">
        <svg width="24" height="16" viewBox="0 0 24 16" fill="none" stroke="currentColor" strokeWidth="1.300" aria-hidden="true">
          <path d="M1 1h19v14H3q-2 0-2-2zM20 3h3v10q0 2-2 2h-2M4 4.500h13M4 7.500h5v4.500H4zM12 7.500h5M12 9.700h5M12 12h5" />
        </svg>
        <span className="ml-2 text-[13px]">31°C</span>
        <span className="ml-[9px] text-[13px]">Partly sunny</span>
        <svg width="12" height="7" viewBox="0 0 12 7" fill="none" stroke="currentColor" strokeWidth="1.300" className="ml-6" aria-hidden="true"><path d="M1 6l5-5 5 5" /></svg>
        <svg width="12" height="16" viewBox="0 0 12 16" fill="none" stroke="currentColor" className="ml-3" aria-hidden="true">
          <path d="M1 4.500h7v7H1zM8 7l3-1.500v5L8 9M2 2.500Q5 0 8.500 2.500M2 13.500Q5 16 8.500 13.500" />
        </svg>
        <svg width="16" height="12" viewBox="0 0 16 12" fill="none" stroke="currentColor" className="ml-[10px]" aria-hidden="true">
          <path d="M5 3.500h9.500v7h-9V8M15.500 5.500v3M.5 2.500h4v2q-2 2.500-4 0zM1.500 2.500V.5M3.500 2.500V.5M2.500 6v3" /><path d="M6.500 5h6.500v4H6.500z" fill="currentColor" />
        </svg>
        <svg width="14" height="14" viewBox="0 0 14 14" fill="none" stroke="currentColor" strokeWidth="1.100" className="ml-[10px]" aria-hidden="true">
          <path d="M1 13A12 12 0 0 1 13 1.500M4 13A9 9 0 0 1 13 4.700M7 13a6 6 0 0 1 6-5.200" /><circle cx="11.500" cy="12" r="1.300" fill="currentColor" />
        </svg>
        <svg width="17" height="14" viewBox="0 0 17 14" fill="none" stroke="currentColor" strokeWidth="1.100" className="ml-[7px]" aria-hidden="true">
          <path d="M1 5h2.500L7 1.500v11L3.500 9H1zM9 5q1.500 2 0 4M11.500 3q3 4 0 8M14 1.500q4 5.500 0 11" />
        </svg>
        <div className="ml-[10px] text-center text-[12px] leading-[17px]">ENG<br />IN</div>
        <div className="ml-3 text-center text-[12px] leading-[17px]">7:17 PM<br />3/10/2023</div>
        <svg width="17" height="16" viewBox="0 0 17 16" fill="none" stroke="currentColor" strokeWidth="1.300" className="ml-[14px]" aria-hidden="true"><path d="M1 1h15v11h-5l-2.500 3L6 12H1z" /></svg>
      </div>
    </footer>
  );
}

export default function App() {
  return (
    <div className={`relative flex h-screen flex-col overflow-hidden ${SANS}`}>
      <div className={BROWSER}>
        <TabStrip />
        <AddressBar />
      </div>
      <AppHeader />
      <div className="flex min-h-0 flex-1">
        <MainPanel />
        <SidePanel />
      </div>
      <Taskbar />
      <div className={`pointer-events-none absolute right-[57px] bottom-[72px] w-[236px] whitespace-nowrap text-[#9a9a9a]/80 ${UI}`}>
        <p className="text-[19px] leading-6">Activate Windows</p>
        <p className="text-[14px] leading-[22px]">Go to Settings to activate Windows.</p>
      </div>
    </div>
  );
}
